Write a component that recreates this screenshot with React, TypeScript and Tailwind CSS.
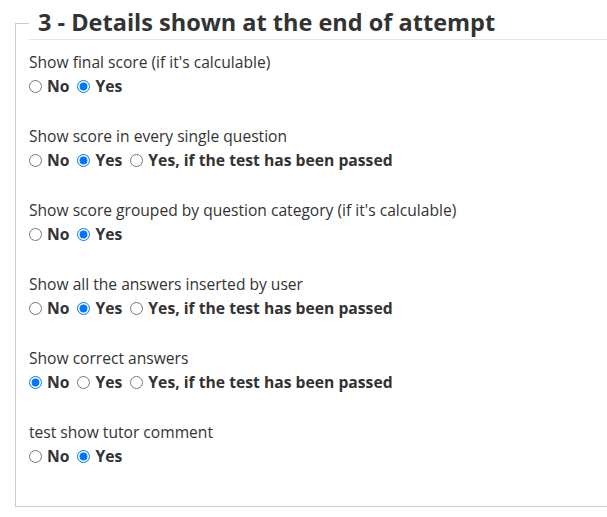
const groups = [
  { label: "Show final score (if it's calculable)", options: ["No", "Yes"], checked: 1 },
  {
    label: "Show score in every single question",
    options: ["No", "Yes", "Yes, if the test has been passed"],
    checked: 1,
  },
  {
    label: "Show score grouped by question category (if it's calculable)",
    options: ["No", "Yes"],
    checked: 1,
  },
  {
    label: "Show all the answers inserted by user",
    options: ["No", "Yes", "Yes, if the test has been passed"],
    checked: 1,
  },
  {
    label: "Show correct answers",
    options: ["No", "Yes", "Yes, if the test has been passed"],
    checked: 0,
  },
  { label: "test show tutor comment", options: ["No", "Yes"], checked: 1 },
];

export default function App() {
  return (
    <div
      className="bg-white pt-[6px] text-[#333] w-[607px] overflow-hidden"
      style={{ fontFamily: '"Open Sans", sans-serif' }}
    >
      <fieldset className="ml-[15px] w-[620px] h-[501px] border border-[#ccc] pl-[13px] pr-4">
        <legend className="w-full border-b border-[#e5e5e5] pl-[9px] text-[23.5px] leading-[33px] font-bold text-[#333]">
          3 - Details shown at the end of attempt
        </legend>
        <div className="pt-[11px]">
          {groups.map((g, gi) => (
            <div key={gi} className="h-[74px]">
              <p className="text-[15.6px] leading-[22px]">{g.label}</p>
              <div className="flex items-center text-[15.7px] leading-[26px] font-bold">
                {g.options.map((o, oi) => (
                  <label key={oi} className="flex items-center">
                    <input
                      type="radio"
                      name={`g${gi}`}
                      defaultChecked={g.checked === oi}
                      className="mr-[5px] h-[13px] w-[13px]"
                    />
                    <span className="mr-[8px]">{o}</span>
                  </label>
                ))}
              </div>
            </div>
          ))}
        </div>
      </fieldset>
    </div>
  );
}
